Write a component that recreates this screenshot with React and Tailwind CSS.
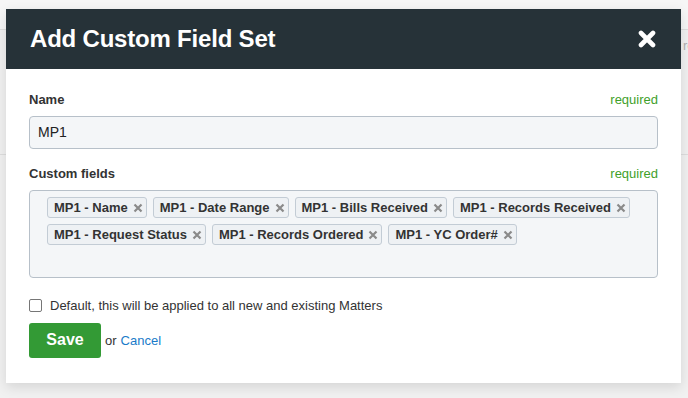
import React from "react";

const tags1 = ["MP1 - Name", "MP1 - Date Range", "MP1 - Bills Received", "MP1 - Records Received"];
const tags2 = ["MP1 - Request Status", "MP1 - Records Ordered", "MP1 - YC Order#"];

function Tag({ label }) {
  return (
    <div className="flex items-center h-[21px] pl-[6px] pr-[3px] bg-[#eef1f4] border border-[#c3ccd5] rounded-[3px] text-[13px] font-bold text-[#333] leading-none">
      <span>{label}</span>
      <svg width="10" height="10" viewBox="0 0 10 10" className="ml-[5px]">
        <path d="M1.5 1.5 L8.5 8.5 M8.5 1.5 L1.5 8.5" stroke="#8a8a8a" strokeWidth="2.2" strokeLinecap="butt" />
      </svg>
    </div>
  );
}

export default function App() {
  return (
    <div className="relative w-[688px] h-[398px] overflow-hidden bg-[#f1f1f1]" style={{ fontFamily: '"Liberation Sans", Arial, sans-serif' }}>
      {/* background page */}
      <div className="flex flex-col">
        <div className="h-[30px] border-b border-[#dedede] bg-[#f6f6f6]" />
        <div className="h-[125px] border-b border-[#dedede] flex justify-end items-start pt-[6px]">
          <span className="text-[13px] text-[#b0b0b0] w-[5px] overflow-hidden whitespace-nowrap">ro</span>
        </div>
      </div>

      {/* modal */}
      <div className="absolute left-[6px] top-[9px] w-[675px] h-[374px] bg-white shadow-[0_4px_12px_rgba(0,0,0,0.12)] flex flex-col">
        <div className="h-[60px] bg-[#263238] flex items-center justify-between pl-[24px] pr-[25px]">
          <h1 className="text-white text-[24px] font-bold leading-none tracking-[-0.2px]">Add Custom Field Set</h1>
          <svg width="18" height="18" viewBox="0 0 18 18">
            <path d="M3 3 L15 15 M15 3 L3 15" stroke="#ffffff" strokeWidth="4.6" strokeLinecap="round" />
          </svg>
        </div>

        <div className="flex flex-col px-[23px] pt-[23px]">
          <div className="flex justify-between items-center h-[16px] text-[13px]">
            <span className="font-bold text-[#333]">Name</span>
            <span className="text-[#3f9f2b]">required</span>
          </div>
          <div className="mt-[8px] h-[33px] bg-[#f4f6f8] border border-[#b7c0c9] rounded-[4px] flex items-center px-[8px] text-[14px] text-[#222]">
            MP1
          </div>

          <div className="mt-[17px] flex justify-between items-center h-[16px] text-[13px]">
            <span className="font-bold text-[#333]">Custom fields</span>
            <span className="text-[#3f9f2b]">required</span>
          </div>
          <div className="mt-[8px] h-[88px] bg-[#f4f6f8] border border-[#b7c0c9] rounded-[4px] pl-[17px] pt-[6px] flex flex-col gap-[6px]">
            <div className="flex gap-[6px]">
              {tags1.map((t) => <Tag key={t} label={t} />)}
            </div>
            <div className="flex gap-[6px]">
              {tags2.map((t) => <Tag key={t} label={t} />)}
            </div>
          </div>

          <div className="mt-[18px] flex items-center gap-[8px] text-[13px] text-[#333]">
            <span className="w-[13px] h-[13px] border border-[#767676] rounded-[2px] bg-white" />
            <span>Default, this will be applied to all new and existing Matters</span>
          </div>

          <div className="mt-[7px] flex items-center gap-[4px] text-[13px]">
            <button className="w-[72px] h-[35px] bg-[#339a35] rounded-[3px] text-white text-[16px] font-bold">Save</button>
            <span className="text-[#333] mt-[2px]">or</span>
            <span className="text-[#1a7bc9] mt-[2px]">Cancel</span>
          </div>
        </div>
      </div>
    </div>
  );
}
